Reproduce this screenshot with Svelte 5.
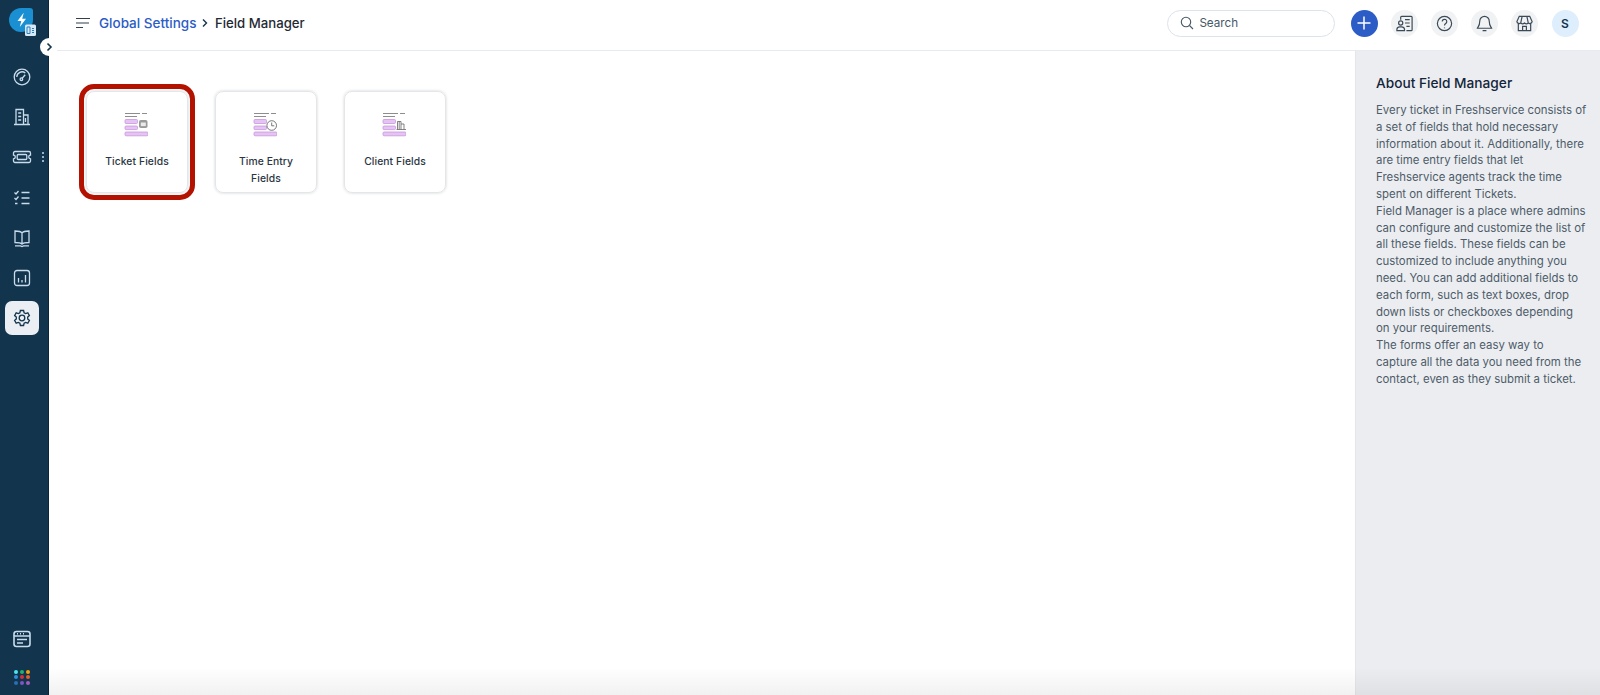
<script>
  const cards = [
    { label: 'Ticket Fields', kind: 'ticket', selected: true },
    { label: 'Time Entry Fields', kind: 'time' },
    { label: 'Client Fields', kind: 'client' }
  ];
</script>

<div class="app">
  <nav class="rail">
    <div class="logo">
      <svg width="28" height="30" viewBox="0 0 28 30">
        <path d="M12 0h9a3 3 0 0 1 3 3v9a12 12 0 0 1-12 12A12 12 0 0 1 0 12 12 12 0 0 1 12 0z" fill="#1a8fd1"/>
        <path d="M14.500 5l-6 8h3.800l-1.500 6 6.200-8.200h-3.800l1.500-5.800z" fill="#fff"/>
        <rect x="16" y="16.500" width="11" height="11.500" rx="1.500" fill="#d6e9f7"/>
        <path d="M18 19v6.500h3V19zM23 20.500h2M23 22.500h2M23 24.500h2" fill="none" stroke="#2c7fbd" stroke-width="1"/>
      </svg>
    </div>
    <div class="toggle">
      <svg width="8" height="10" viewBox="0 0 8 10"><path d="M2.500 1.500L6 5L2.500 8.500" fill="none" stroke="#12344d" stroke-width="1.600"/></svg>
    </div>

    <div class="nav-list">
      <div class="nav-item">
        <svg viewBox="0 0 20 20"><circle cx="10" cy="10" r="7.800"/><path d="M4.800 10a5.200 5.200 0 0 1 8.500-4"/><path d="M13.200 7.800L10 11.500"/><circle cx="9.400" cy="12.200" r="1.300"/></svg>
      </div>
      <div class="nav-item">
        <svg viewBox="0 0 20 20"><path d="M4 17.500V2.500h7.500v15M11.500 8H16v9.500M2 17.500h16M6.200 6h3M6.200 9.500h3M6.200 13h3M13.500 11v4"/></svg>
      </div>
      <div class="nav-item">
        <svg viewBox="0 0 20 20"><path d="M3 4.500h14a1.500 1.500 0 0 1 1.500 1.500v2.200a1.800 1.800 0 0 0 0 3.600V14a1.500 1.500 0 0 1-1.500 1.500H3A1.500 1.500 0 0 1 1.500 14v-2.200a1.800 1.800 0 0 0 0-3.600V6A1.500 1.500 0 0 1 3 4.500z"/><rect x="5.200" y="7.500" width="9.600" height="5" rx="1"/></svg>
        <span class="dots"><i></i><i></i><i></i></span>
      </div>
      <div class="nav-item">
        <svg viewBox="0 0 20 20"><path d="M2.500 4.500l1.500 1.500 2.500-3M2.500 10l1.500 1.500 2.500-3M3 15.500h2.500M9.500 4.500h8M9.500 10h8M9.500 15.500h8"/></svg>
      </div>
      <div class="nav-item">
        <svg viewBox="0 0 20 20"><path d="M10 5C9 3.500 7 3 3 3v11.500c4 0 6 .5 7 1.500 1-1 3-1.500 7-1.500V3c-4 0-6 .5-7 2zM10 5v11M3 17.800h5.500l1.500.7 1.500-.7H17"/></svg>
      </div>
      <div class="nav-item">
        <svg viewBox="0 0 20 20"><rect x="2.500" y="2.500" width="15" height="15" rx="2.500"/><path d="M6.500 14.500v-4.500M10 14.500V12M13.500 14.500V7"/></svg>
      </div>
      <div class="nav-item active">
        <svg viewBox="0 0 20 20"><circle cx="10" cy="10" r="2.800"/><path d="M8.400 2.500h3.200l.5 2.200 1.500.8 2.200-.7 1.600 2.800-1.700 1.500v1.800l1.700 1.500-1.600 2.800-2.200-.7-1.500.8-.5 2.200H8.400l-.5-2.200-1.500-.8-2.200.7-1.600-2.800 1.700-1.500V9.100L2.600 7.600l1.600-2.800 2.200.7 1.500-.8z"/></svg>
      </div>
    </div>

    <div class="rail-bottom">
      <div class="nav-item">
        <svg class="heavy" viewBox="0 0 20 20"><rect x="2" y="2.500" width="16" height="15" rx="2.500"/><path d="M2 7h16M5 4.800h1M8 4.800h1M11 4.800h1M5 10.500h10M5 14h6"/></svg>
      </div>
      <div class="apps">
        {#each ['#4de3f0','#1fb36b','#f0a30a','#2f8fde','#d92d3f','#e2602a','#2a6fb5','#7d55c4','#a45bc0'] as c}
          <i style="background:{c}"></i>
        {/each}
      </div>
    </div>
  </nav>

  <div class="page">
    <header class="top">
      <svg class="menu" width="16" height="12" viewBox="0 0 16 12"><path d="M1 1.500h14M1 6h13M1 10.500h7" fill="none" stroke="#333f4a" stroke-width="1.200"/></svg>
      <a class="crumb">Global Settings</a>
      <svg class="sep" width="8" height="10" viewBox="0 0 8 10"><path d="M2 1.500L5.500 5L2 8.500" fill="none" stroke="#12344d" stroke-width="1.400"/></svg>
      <span class="current">Field Manager</span>

      <div class="actions">
        <div class="search">
          <svg width="14" height="14" viewBox="0 0 14 14"><circle cx="6" cy="6" r="4.700"/><path d="M9.500 9.500L13 13"/></svg>
          <span>Search</span>
        </div>
        <div class="round plus">
          <svg width="14" height="14" viewBox="0 0 14 14"><path d="M7 .5v13M.5 7h13" stroke="#fff" stroke-width="1.500"/></svg>
        </div>
        <div class="round">
          <svg viewBox="0 0 20 20"><path d="M6 6V3.500a1 1 0 0 1 1-1h10a1 1 0 0 1 1 1v13a1 1 0 0 1-1 1h-5M10.500 6h5M10.500 9.500h5M12 13h3.500"/><circle cx="6" cy="9.500" r="2.200"/><path d="M2 17.500v-1.500a3 3 0 0 1 3-2.500h2a3 3 0 0 1 3 2.500v1.500z"/></svg>
        </div>
        <div class="round">
          <svg viewBox="0 0 20 20"><circle cx="10" cy="10" r="7.500"/><path d="M7.600 8a2.400 2.400 0 1 1 3.700 2c-.8.500-1.300 1-1.300 2M10 14.200v.8"/></svg>
        </div>
        <div class="round">
          <svg viewBox="0 0 20 20"><path d="M10 2.500a5 5 0 0 1 5 5c0 5 2 6 2.500 7.500h-15C3 13.500 5 12.500 5 7.500a5 5 0 0 1 5-5zM8 17.500h4"/></svg>
        </div>
        <div class="round">
          <svg viewBox="0 0 20 20"><path d="M4.500 2.500h11L18 8a2.500 2.500 0 0 1-4 1.500 3 3 0 0 1-4 0 3 3 0 0 1-4 0A2.500 2.500 0 0 1 2 8zM3.500 10.500v7h13v-7M8 17.500v-4.500h4v4.500M7.500 2.500L6 9.500M12.500 2.500L14 9.500"/></svg>
        </div>
        <div class="round avatar">S</div>
      </div>
    </header>

    <div class="body">
      <main class="content">
        <div class="cards">
          {#each cards as card}
            <div class="card" class:selected={card.selected}>
              <svg class="art" width="24" height="25" viewBox="0 0 24 25">
                <path d="M1 1.500h15M18 1.500h5M1 4.500h12" stroke="#8d8d8d" fill="none" stroke-width="1"/>
                <rect x="1" y="7.500" width="12.500" height="4" rx="1" class="bar"/>
                <rect x="1" y="14" width="12.500" height="3.600" rx="1" class="bar"/>
                <rect x="1" y="20" width="23" height="3.800" rx="1" class="bar"/>
                {#if card.kind === 'ticket'}
                  <rect x="15" y="8" width="8.500" height="8" rx="1.800" fill="#9a9a9a"/>
                  <rect x="16.800" y="10.500" width="5" height="3.600" fill="#eaeaea"/>
                {:else if card.kind === 'time'}
                  <circle cx="18.700" cy="13.500" r="4.800" fill="#fff" stroke="#555" stroke-width=".8"/>
                  <path d="M18.700 10.500v3.300h2.600" fill="none" stroke="#555" stroke-width=".8"/>
                {:else}
                  <path d="M15.500 17.500V9.500h3.500v8M19 12h3v5.500M14.500 17.500h9.500M17.200 9.500v8" fill="none" stroke="#666" stroke-width=".8"/>
                {/if}
              </svg>
              <div class="label">{card.label}</div>
            </div>
          {/each}
        </div>
      </main>

      <aside class="help">
        <h2>About Field Manager</h2>
        <p>Every ticket in Freshservice consists of a set of fields that hold necessary information about it. Additionally, there are time entry fields that let Freshservice agents track the time spent on different Tickets.<br/>Field Manager is a place where admins can configure and customize the list of all these fields. These fields can be customized to include anything you need. You can add additional fields to each form, such as text boxes, drop down lists or checkboxes depending on your requirements.<br/>The forms offer an easy way to capture all the data you need from the contact, even as they submit a ticket.</p>
      </aside>
      <div class="fade"></div>
    </div>
  </div>
</div>

<style>
  :global(body) {
    margin: 0;
    font-family: Inter, "Liberation Sans", sans-serif;
    background: #fff;
  }
  .app {
    display: flex;
    height: 695px;
    overflow: hidden;
  }
  .rail {
    position: relative;
    flex: 0 0 49px;
    box-sizing: border-box;
    display: flex;
    flex-direction: column;
    align-items: stretch;
    background: #12344d;
    border-right: 1px solid #0c2438;
    z-index: 2;
  }
  .logo {
    height: 57px;
    padding: 8px 0 0 9px;
    box-sizing: border-box;
  }
  .logo svg { display: block; }
  .toggle {
    position: absolute;
    left: 40px;
    top: 38px;
    width: 18px;
    height: 18px;
    border-radius: 50%;
    background: #fff;
    display: flex;
    align-items: center;
    justify-content: center;
  }
  .nav-list {
    display: flex;
    flex-direction: column;
    gap: 6.200px;
    padding: 3px 9px 0 5px;
  }
  .nav-item {
    position: relative;
    height: 34px;
    border-radius: 7px;
    display: flex;
    align-items: center;
    justify-content: center;
  }
  .nav-item svg {
    width: 20px;
    height: 20px;
    fill: none;
    stroke: #c9dcec;
    stroke-width: 1.300;
  }
  .nav-item svg.heavy { stroke-width: 1.600; }
  .nav-item.active { background: #ebeff3; }
  .nav-item.active svg { stroke: #12344d; }
  .dots {
    position: absolute;
    right: -5px;
    top: 12px;
    display: flex;
    flex-direction: column;
    gap: 2px;
  }
  .dots i {
    width: 2px;
    height: 2px;
    border-radius: 50%;
    background: #c9dcec;
  }
  .rail-bottom {
    margin-top: auto;
    padding: 0 9px 10px 5px;
    display: flex;
    flex-direction: column;
    align-items: center;
    gap: 14px;
  }
  .rail-bottom .nav-item { width: 34px; }
  .apps {
    display: grid;
    grid-template-columns: repeat(3, 4px);
    gap: 1.600px;
  }
  .apps i {
    width: 4px;
    height: 4px;
    border-radius: 50%;
  }
  .page {
    flex: 1;
    min-width: 0;
    display: flex;
    flex-direction: column;
  }
  .top {
    flex: 0 0 51px;
    box-sizing: border-box;
    display: flex;
    align-items: center;
    padding: 0 21.500px 4px 26px;
    border-bottom: 1px solid #e6ebf1;
    background: #fff;
  }
  .menu { margin-right: 8px; }
  .crumb {
    color: #2c5cc5;
    font-size: 13.500px;
    font-weight: 500;
  }
  .sep { margin: 0 6px 0 4.500px; }
  .current {
    font-size: 13.200px;
    font-weight: 500;
    color: #1f2a33;
  }
  .actions {
    margin-left: auto;
    display: flex;
    align-items: center;
    gap: 13.200px;
  }
  .search {
    box-sizing: border-box;
    width: 168px;
    height: 27px;
    margin-right: 2px;
    border: 1px solid #dce3ea;
    border-radius: 14px;
    display: flex;
    align-items: center;
    gap: 5px;
    padding-left: 12px;
    font-size: 11.700px;
    color: #475867;
  }
  .search svg {
    fill: none;
    stroke: #475867;
    stroke-width: 1.100;
  }
  .round {
    width: 27px;
    height: 27px;
    border-radius: 50%;
    background: #f1f2f4;
    display: flex;
    align-items: center;
    justify-content: center;
  }
  .round svg {
    width: 19px;
    height: 19px;
    fill: none;
    stroke: #3b4a57;
    stroke-width: 1.250;
  }
  .round.plus { background: #2c5cc5; }
  .round.plus svg { width: 14px; height: 14px; }
  .avatar {
    background: #deeefc;
    color: #12344d;
    font-size: 12px;
    font-weight: 600;
  }
  .body {
    position: relative;
    flex: 1;
    min-height: 0;
    display: flex;
  }
  .content {
    flex: 1;
    min-width: 0;
    padding: 40px 0 0 37px;
  }
  .cards {
    display: flex;
    gap: 27px;
  }
  .card {
    position: relative;
    box-sizing: border-box;
    width: 102px;
    height: 102px;
    border: 1px solid #e3e6ea;
    border-radius: 8px;
    box-shadow: 0 0 3px rgba(30, 40, 50, .2);
    display: flex;
    flex-direction: column;
    align-items: center;
    padding-top: 20px;
  }
  .card.selected::after {
    content: '';
    position: absolute;
    inset: -8px;
    border: 5.500px solid #b41200;
    border-radius: 15px;
    pointer-events: none;
  }
  .art { display: block; margin: 0 3px 16px 0; }
  .art .bar { fill: #e4c4f1; stroke: #cc94e2; stroke-width: .8; }
  .label {
    text-align: center;
    font-size: 10.300px;
    font-weight: 500;
    letter-spacing: .1px;
    line-height: 16.500px;
    color: #2a3642;
    padding: 0 16px;
  }
  .help {
    flex: 0 0 245px;
    box-sizing: border-box;
    background: #ecedf0;
    border-left: 1px solid #e4e6ea;
    padding: 22px 13px 0 20px;
  }
  .help h2 {
    margin: 0 0 9px;
    font-size: 13.700px;
    font-weight: 500;
    line-height: 20px;
    color: #12253a;
  }
  .help p {
    margin: 0;
    font-size: 11.400px;
    line-height: 16.800px;
    color: #4d5c6a;
  }
  .fade {
    position: absolute;
    left: 0;
    right: 0;
    bottom: 0;
    height: 28px;
    background: linear-gradient(to bottom, rgba(0,0,0,0), rgba(0,0,0,.055));
    pointer-events: none;
  }
</style>
